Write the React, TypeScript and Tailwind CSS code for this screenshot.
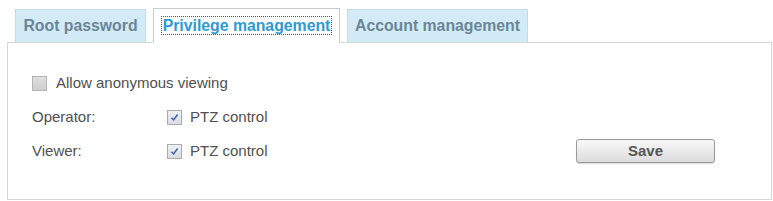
import { useState } from "react"

const tabs = ["Root password", "Privilege management", "Account management"]
const tabWidths = ["w-[131px]", "w-[187px]", "w-[181px]"]

function Box({ checked, onClick }: { checked: boolean; onClick: () => void }) {
  return (
    <span
      onClick={onClick}
      className={`w-[15px] h-[15px] shrink-0 border flex items-center justify-center ${
        checked
          ? "border-[#a8acb2] bg-gradient-to-b from-[#eef0f3] to-[#d9dde2]"
          : "border-[#b4b4b4] bg-gradient-to-b from-[#dedede] to-[#cfcfcf]"
      }`}
    >
      {checked && (
        <svg width="9" height="9" viewBox="0 0 9 9">
          <path d="M1.5 4.8 L3.6 7 L7.6 1.5" fill="none" stroke="#3a5ea8" strokeWidth="1.4" />
        </svg>
      )}
    </span>
  )
}

export default function App() {
  const [active, setActive] = useState(1)
  const [anon, setAnon] = useState(false)
  const [op, setOp] = useState(true)
  const [viewer, setViewer] = useState(true)

  return (
    <div className="w-[773px] h-[201px] bg-white pl-[7px] pt-[8px] font-['Liberation_Sans',Arial,sans-serif]">
      {/* Tabs */}
      <div className="flex items-end gap-[7px] pl-[8px] h-[34px]">
        {tabs.map((t, i) =>
          i === active ? (
            <div
              key={t}
              onClick={() => setActive(i)}
              className={`${tabWidths[i]} h-[35px] -mb-[1px] relative z-10 bg-white border border-[#c9cdd1] border-b-white flex items-center justify-center`}
            >
              <span className="border border-dotted border-[#555] px-[1px] leading-[17px] text-[15.8px] font-bold text-[#2e9ad3]">
                {t}
              </span>
            </div>
          ) : (
            <div
              key={t}
              onClick={() => setActive(i)}
              className={`${tabWidths[i]} h-[33px] bg-[#d3ebf7] border border-[#c3dbe8] border-b-0 flex items-center justify-center text-[15.8px] font-bold text-[#6a8696]`}
            >
              {t}
            </div>
          )
        )}
      </div>

      {/* Panel */}
      <div className="w-[765px] h-[158px] border border-[#d4d7da] pt-[23px] pl-[24px] pr-[56px] text-[15px] text-[#505050]">
        <div className="h-[34px] flex items-center gap-[9px]">
          <Box checked={anon} onClick={() => setAnon(!anon)} />
          <span>Allow anonymous viewing</span>
        </div>
        <div className="h-[34px] flex items-center">
          <span className="w-[135px]">Operator:</span>
          <Box checked={op} onClick={() => setOp(!op)} />
          <span className="ml-[8px]">PTZ control</span>
        </div>
        <div className="h-[34px] flex items-center">
          <span className="w-[135px]">Viewer:</span>
          <Box checked={viewer} onClick={() => setViewer(!viewer)} />
          <span className="ml-[8px]">PTZ control</span>
          <button className="ml-auto w-[139px] h-[24px] rounded-[3px] border border-[#9a9a9a] bg-gradient-to-b from-[#f8f8f8] to-[#dcdcdc] text-[15px] font-bold text-[#555] shadow-[0_1px_1px_rgba(0,0,0,0.15)]">
            Save
          </button>
        </div>
      </div>
    </div>
  )
}
